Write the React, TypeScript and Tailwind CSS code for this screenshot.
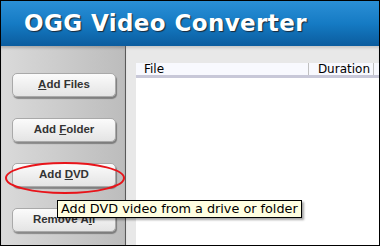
const SideButton = ({ children, top }: { children: React.ReactNode; top?: boolean }) => {
  return (
    <div
      className={`h-[24px] w-[104px] ml-[11px] rounded-[5px] border border-[#a9a9a9] bg-gradient-to-b from-[#fbfbfb] to-[#e4e4e4] shadow-[1px_2px_1px_rgba(0,0,0,0.35)] flex items-center justify-center text-[11.5px] font-bold text-[#333] ${top ? "" : "mt-[21px]"}`}
      style={{ fontFamily: "'Liberation Sans', Arial, sans-serif" }}
    >
      {children}
    </div>
  );
};

export default function App() {
  return (
    <div className="w-[380px] h-[246px] border border-black flex flex-col bg-[#e9e9e9] relative overflow-hidden">
      {/* header */}
      <div className="h-[45px] bg-gradient-to-b from-[#2a8fd6] via-[#157bc4] to-[#0b5c9e] flex items-center pl-[23px] shrink-0">
        <span
          className="text-white font-bold text-[23px] tracking-[0.4px] [text-shadow:1px_1px_1px_#1b2a3a]"
          style={{ fontFamily: "'DejaVu Sans', Verdana, sans-serif" }}
        >
          OGG Video Converter
        </span>
      </div>

      <div className="flex flex-1 min-h-0">
        {/* left button panel */}
        <div className="w-[125px] bg-gradient-to-r from-[#dadada] to-[#bcbcbc] border-r border-[#5a5a5a] pt-[27px] flex flex-col shadow-[inset_0_3px_3px_-1px_rgba(0,0,0,0.2)]">
          <SideButton top>
            <span><u>A</u>dd Files</span>
          </SideButton>
          <SideButton>
            <span>Add <u>F</u>older</span>
          </SideButton>
          <SideButton>
            <span>Add <u>D</u>VD</span>
          </SideButton>
          <SideButton>
            <span>Remove A<u>l</u>l</span>
          </SideButton>
        </div>

        {/* file list */}
        <div className="flex-1 pt-[17px] pl-[10px] bg-[#e8e8e8] shadow-[inset_0_3px_3px_-1px_rgba(0,0,0,0.15)]">
          <div className="h-full bg-white flex flex-col">
            <div
              className="h-[15px] bg-[#f8f9fe] flex items-center text-[12px] text-black border-b-[3px] border-[#c8c8d8]"
              style={{ fontFamily: "Tahoma, 'DejaVu Sans', sans-serif" }}
            >
              <div className="w-[173px] pl-[8px] border-r border-[#c0c0c0] h-[12px] flex items-center">File</div>
              <div className="w-[65px] flex items-center justify-end pr-[3px] border-r border-[#c0c0c0] h-[12px]">Duration</div>
            </div>
          </div>
        </div>
      </div>

      {/* red highlight around Add DVD */}
      <svg className="absolute left-[3px] top-[160px]" width="122" height="34" viewBox="0 0 122 34">
        <ellipse cx="61" cy="17" rx="59" ry="15" fill="none" stroke="#e8141a" strokeWidth="2" />
      </svg>

      {/* tooltip */}
      <div
        className="absolute left-[56px] top-[199px] h-[18px] px-[3px] bg-[#ffffe1] border border-black text-[12.8px] text-black flex items-center shadow-[2px_2px_2px_rgba(0,0,0,0.35)] whitespace-nowrap"
        style={{ fontFamily: "Tahoma, 'DejaVu Sans', sans-serif" }}
      >
        Add DVD video from a drive or folder
      </div>
    </div>
  );
}
